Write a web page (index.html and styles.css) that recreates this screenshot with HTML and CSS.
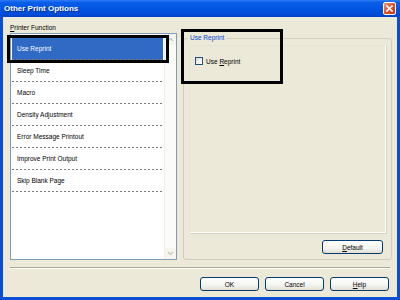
FILE: index.html
```html
<!DOCTYPE html>
<html lang="en">
<head>
    <meta charset="UTF-8">
    <title>Other Print Options</title>
    <link rel="stylesheet" href="styles.css">
</head>
<body>

<div class="window">
    <div class="titlebar">
        <span class="title">Other Print Options</span>
        <span class="close">
            <svg width="7" height="7" viewBox="0 0 7 7"><path d="M1 1L6 6M6 1L1 6" stroke="#fff" stroke-width="1.6" stroke-linecap="square"/></svg>
        </span>
    </div>

    <div class="client">
        <div class="main">
            <div class="left">
                <div class="caption"><u>P</u>rinter Function</div>
                <div class="listbox">
                    <ul class="items">
                        <li class="item selected">Use Reprint</li>
                        <li class="item">Sleep Time</li>
                        <li class="item">Macro</li>
                        <li class="item">Density Adjustment</li>
                        <li class="item">Error Message Printout</li>
                        <li class="item">Improve Print Output</li>
                        <li class="item">Skip Blank Page</li>
                    </ul>
                    <div class="scrollbar">
                        <span class="arrow"><svg width="7" height="5" viewBox="0 0 7 5"><path d="M1 4L3.5 1.5L6 4" fill="none" stroke="#c9c7ba" stroke-width="1.3"/></svg></span>
                        <span class="arrow"><svg width="7" height="5" viewBox="0 0 7 5"><path d="M1 1L3.5 3.5L6 1" fill="none" stroke="#c9c7ba" stroke-width="1.3"/></svg></span>
                    </div>
                </div>
            </div>

            <fieldset class="panel">
                <legend>Use Reprint</legend>
                <div class="inner">
                    <label class="check"><span class="box"></span><span>Use <u>R</u>eprint</span></label>
                </div>
                <div class="panel-foot">
                    <button class="btn btn-default"><u>D</u>efault</button>
                </div>
            </fieldset>
        </div>

        <div class="separator"></div>

        <div class="actions">
            <button class="btn">OK</button>
            <button class="btn">Cancel</button>
            <button class="btn"><u>H</u>elp</button>
        </div>
    </div>

    <div class="mark mark-list"></div>
    <div class="mark mark-panel"></div>
</div>

</body>
</html>
```

FILE: styles.css
```css
body {
    margin: 0;
    font-family: 'Liberation Sans', Arial, sans-serif;
    font-size: 6.5px;
    color: #000;
}
.window {
    position: relative;
    width: 400px;
    height: 300px;
    box-sizing: border-box;
    background: #0a4ed6;
    display: flex;
    flex-direction: column;
}
.titlebar {
    height: 17px;
    display: flex;
    align-items: center;
    background: linear-gradient(#2f7bf3, #0a5fe8 15%, #0055e3 50%, #004cd8 85%, #0040c4);
}
.title {
    flex: 1;
    padding-left: 4px;
    color: #fff;
    font-weight: bold;
    font-size: 8px;
    text-shadow: 1px 1px 0 #0a2a8a;
}
.close {
    width: 13px;
    height: 13px;
    margin-right: 4px;
    box-sizing: border-box;
    border: 1px solid #fff;
    border-radius: 2px;
    background: linear-gradient(135deg, #f09a7c, #e0562e 45%, #c2351a);
    display: flex;
    align-items: center;
    justify-content: center;
}
.client {
    flex: 1;
    margin: 0 3px 3px;
    background: #ece9d8;
    padding: 5px 5px 0 7px;
}
.main {
    display: flex;
}
.left {
    width: 167px;
}
.caption {
    height: 11px;
    line-height: 11px;
}
.listbox {
    height: 227px;
    box-sizing: border-box;
    border: 1px solid #7f9db9;
    background: #fff;
    display: flex;
}
.items {
    flex: 1;
    list-style: none;
    margin: 0;
    padding: 4px 1px 0 1px;
}
.item {
    height: 21px;
    line-height: 21px;
    padding-left: 5px;
    padding-bottom: 1px;
    background: repeating-linear-gradient(90deg, #7a7a7a 0 2px, transparent 2px 4px) bottom / 100% 1px no-repeat;
}
.item.selected {
    background-color: #316ac5;
    color: #fff;
}
.scrollbar {
    width: 11px;
    background: #fbfbf8;
    border-left: 1px solid #f0efe8;
    display: flex;
    flex-direction: column;
    justify-content: space-between;
}
.arrow {
    height: 11px;
    display: flex;
    align-items: center;
    justify-content: center;
    background: #f6f5ee;
}
.panel {
    width: 209px;
    height: 227px;
    box-sizing: border-box;
    margin: 11px 0 0 6px;
    padding: 0;
    border: 1px solid #d0cdbe;
    border-radius: 3px;
}
.panel legend {
    margin-left: 4px;
    padding: 0 2px;
    line-height: 10px;
    color: #0046d5;
}
.inner {
    height: 188px;
    box-sizing: border-box;
    margin: 2px 5px 0;
    padding: 11px 0 0 5px;
    border: 1px solid #e6e3d5;
    border-right-color: #fff;
    border-bottom-color: #fff;
    box-shadow: 1px 1px 0 #d6d2c2;
}
.check {
    display: flex;
    align-items: center;
}
.box {
    width: 8px;
    height: 8px;
    box-sizing: border-box;
    margin-right: 3px;
    border: 1px solid #1c5180;
    background: linear-gradient(135deg, #dcdbd5, #fff);
}
.panel-foot {
    display: flex;
    justify-content: flex-end;
    margin-top: 7px;
    padding-right: 8px;
}
.btn {
    width: 59px;
    height: 14px;
    padding: 0;
    border: 1px solid #003c74;
    border-radius: 3px;
    background: linear-gradient(#ffffff, #f4f4f0 60%, #e2ded3);
    font-family: inherit;
    font-size: 6.5px;
    color: #000;
}
.btn-default {
    width: 61px;
}
.separator {
    height: 0;
    margin: 7px 2px 0 0;
    border-top: 1px solid #aca899;
    border-bottom: 1px solid #fff;
}
.actions {
    display: flex;
    justify-content: flex-end;
    gap: 6px;
    margin-top: 8px;
    padding-right: 3px;
}
.mark {
    position: absolute;
    border: 3px solid #000;
}
.mark-list {
    left: 7px;
    top: 35px;
    width: 156px;
    height: 22px;
}
.mark-panel {
    left: 181px;
    top: 29px;
    width: 96px;
    height: 49px;
}
```
